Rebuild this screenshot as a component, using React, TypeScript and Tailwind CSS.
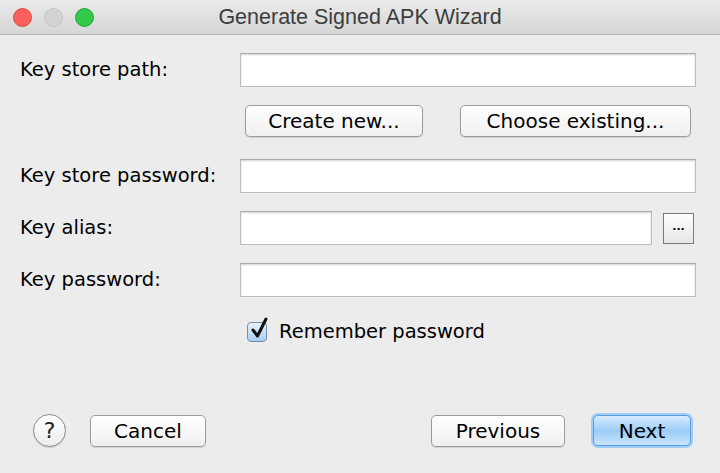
import React from "react";

const labelFont = { fontFamily: '"DejaVu Sans", "Open Sans", sans-serif' };

function Field({ className = "" }: { className?: string }) {
  return (
    <div
      className={
        "h-[34px] border border-[#bdbdbd] border-t-[#a9a9a9] bg-white shadow-[inset_0_1px_2px_rgba(0,0,0,0.18)] " +
        className
      }
    />
  );
}

function MacButton({ label, className = "" }: { label: string; className?: string }) {
  return (
    <button
      className={
        "flex h-[32px] items-center justify-center rounded-[5px] border border-[#9c9c9c] bg-gradient-to-b from-white to-[#f0f0f0] text-[20px] text-black shadow-[0_1px_1px_rgba(0,0,0,0.12)] " +
        className
      }
    >
      {label}
    </button>
  );
}

function Row({ label, children }: { label: string; children: React.ReactNode }) {
  return (
    <div className="flex items-center">
      <div className="w-[220px] text-[19.5px] text-black">{label}</div>
      <div className="flex flex-1 items-center">{children}</div>
    </div>
  );
}

export default function App() {
  return (
    <div className="h-[473px] w-[720px] overflow-hidden bg-[#ececec]" style={labelFont}>
      {/* title bar */}
      <div className="relative flex h-[35px] items-center border-b border-[#b4b4b4] bg-gradient-to-b from-[#ebebeb] to-[#d5d5d5]">
        <div className="flex items-center gap-[12px] pl-[13px]">
          <span className="h-[19px] w-[19px] rounded-full border border-[#e0443e] bg-[#fc605c]" />
          <span className="h-[19px] w-[19px] rounded-full border border-[#c4c4c4] bg-[#d3d3d3]" />
          <span className="h-[19px] w-[19px] rounded-full border border-[#1fa934] bg-[#34c84a]" />
        </div>
        <div
          className="absolute inset-x-0 text-center text-[21.5px] text-[#3d3d3d]"
          style={{ fontFamily: '"Liberation Sans", Arial, sans-serif' }}
        >
          Generate Signed APK Wizard
        </div>
      </div>

      {/* form */}
      <div className="flex flex-col pl-[20px] pr-[24px] pt-[18px]">
        <Row label="Key store path:">
          <Field className="flex-1" />
        </Row>
        <div className="mt-[18px] flex justify-between pl-[225px] pr-[5px]">
          <MacButton label="Create new..." className="w-[178px]" />
          <MacButton label="Choose existing..." className="w-[231px]" />
        </div>
        <div className="mt-[22px] flex flex-col gap-[18px]">
          <Row label="Key store password:">
            <Field className="flex-1" />
          </Row>
          <Row label="Key alias:">
            <Field className="flex-1" />
            <button className="ml-[11px] mr-[2px] flex h-[31px] w-[31px] items-center justify-center border border-[#7a7a7a] bg-gradient-to-b from-white to-[#e6e6e6] pb-[4px] text-[11px] font-bold leading-none text-black">
              ...
            </button>
          </Row>
          <Row label="Key password:">
            <Field className="flex-1" />
          </Row>
        </div>
        <div className="mt-[20px] flex items-center pl-[227px]">
          <span className="relative h-[20px] w-[20px] rounded-[4px] border border-[#6f8fb0] bg-gradient-to-b from-[#e8f2fc] to-[#a9cdf0]">
            <svg viewBox="0 0 20 24" className="absolute left-[1px] top-[-6px] h-[24px] w-[20px]">
              <path d="M4 13 L8.5 19 L17 2" fill="none" stroke="#111" strokeWidth="3" strokeLinecap="round" strokeLinejoin="round" />
            </svg>
          </span>
          <span className="ml-[12px] text-[19.5px] text-black">Remember password</span>
        </div>
      </div>

      {/* footer */}
      <div className="mt-[67px] flex items-center pl-[33px] pr-[27px]">
        <div className="flex h-[33px] w-[33px] items-center justify-center rounded-full border border-[#8a8a8a] bg-gradient-to-b from-white to-[#ededed] text-[22px] text-[#222] shadow-[0_1px_1px_rgba(0,0,0,0.15)]">
          ?
        </div>
        <MacButton label="Cancel" className="ml-[24px] w-[116px]" />
        <div className="flex-1" />
        <MacButton label="Previous" className="w-[134px]" />
        <div className="ml-[26px] rounded-[7px] bg-[#9fcdf6] p-[2px]">
          <button className="flex h-[31px] w-[98px] items-center justify-center rounded-[5px] border border-[#5b9ee0] bg-gradient-to-b from-[#d9ecfd] via-[#9ccdf8] to-[#c8e4fc] text-[20px] text-black">
            Next
          </button>
        </div>
      </div>
    </div>
  );
}
